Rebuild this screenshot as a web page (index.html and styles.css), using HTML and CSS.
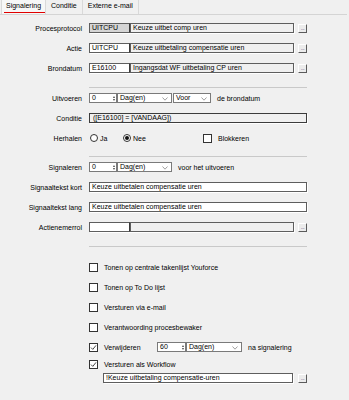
FILE: index.html
```html
<!DOCTYPE html>
<html>
<head>
<meta charset="utf-8">
<link rel="stylesheet" href="styles.css">
</head>
<body>
<div class="tabs">
  <div class="tab active"><span>Signalering</span></div>
  <div class="tab"><span>Conditie</span></div>
  <div class="tab"><span>Externe e-mail</span></div>
</div>
<div class="panel">
  <div class="row">
    <div class="lbl">Procesprotocol</div>
    <div class="field code grey">UITCPU</div>
    <div class="field desc">Keuze uitbet comp uren</div>
    <div class="btn">...</div>
  </div>
  <div class="row">
    <div class="lbl">Actie</div>
    <div class="field code">UITCPU</div>
    <div class="field desc">Keuze uitbetaling compensatie uren</div>
    <div class="btn">...</div>
  </div>
  <div class="row">
    <div class="lbl">Brondatum</div>
    <div class="field code">E16100</div>
    <div class="field desc">Ingangsdat WF uitbetaling CP uren</div>
    <div class="btn">...</div>
  </div>
  <div class="sep"></div>
  <div class="row">
    <div class="lbl">Uitvoeren</div>
    <div class="spin w27">0<span class="arrows"><i class="up"></i><i class="dn"></i></span></div>
    <div class="combo w55">Dag(en)<svg class="chev" width="6" height="4" viewBox="0 0 6 4"><polyline points="0.5,0.5 3,3.2 5.5,0.5" fill="none" stroke="#777" stroke-width="0.7"/></svg></div>
    <div class="combo w38">Voor<svg class="chev" width="6" height="4" viewBox="0 0 6 4"><polyline points="0.5,0.5 3,3.2 5.5,0.5" fill="none" stroke="#777" stroke-width="0.7"/></svg></div>
    <div class="after">de brondatum</div>
  </div>
  <div class="row">
    <div class="lbl">Conditie</div>
    <div class="field full cond">([E16100] = [VANDAAG])</div>
  </div>
  <div class="row">
    <div class="lbl">Herhalen</div>
    <div class="radio"></div><div class="rlbl ja">Ja</div>
    <div class="radio on"></div><div class="rlbl nee">Nee</div>
    <div class="check"></div><div class="clbl">Blokkeren</div>
  </div>
  <div class="sep sep2"></div>
  <div class="row">
    <div class="lbl">Signaleren</div>
    <div class="spin w27">0<span class="arrows"><i class="up"></i><i class="dn"></i></span></div>
    <div class="combo w55">Dag(en)<svg class="chev" width="6" height="4" viewBox="0 0 6 4"><polyline points="0.5,0.5 3,3.2 5.5,0.5" fill="none" stroke="#777" stroke-width="0.7"/></svg></div>
    <div class="after">voor het uitvoeren</div>
  </div>
  <div class="row">
    <div class="lbl">Signaaltekst kort</div>
    <div class="field full white">Keuze uitbetalen compensatie uren</div>
  </div>
  <div class="row">
    <div class="lbl">Signaaltekst lang</div>
    <div class="field full white">Keuze uitbetalen compensatie uren</div>
  </div>
  <div class="row">
    <div class="lbl">Actienemerrol</div>
    <div class="field code"></div>
    <div class="field desc"></div>
    <div class="btn">...</div>
  </div>
  <div class="sep sep3"></div>
  <div class="crow first">
    <div class="check"></div><div class="clbl">Tonen op centrale takenlijst Youforce</div>
  </div>
  <div class="crow">
    <div class="check"></div><div class="clbl">Tonen op To Do lijst</div>
  </div>
  <div class="crow">
    <div class="check"></div><div class="clbl">Versturen via e-mail</div>
  </div>
  <div class="crow">
    <div class="check"></div><div class="clbl">Verantwoording procesbewaker</div>
  </div>
  <div class="crow">
    <div class="check on"><svg width="7" height="7" viewBox="0 0 7 7"><polyline points="1,3.6 2.8,5.4 6,1.4" fill="none" stroke="#333" stroke-width="0.9"/></svg></div>
    <div class="clbl wverw">Verwijderen</div>
    <div class="spin w29">60<span class="arrows"><i class="up"></i><i class="dn"></i></span></div>
    <div class="combo w56">Dag(en)<svg class="chev" width="6" height="4" viewBox="0 0 6 4"><polyline points="0.5,0.5 3,3.2 5.5,0.5" fill="none" stroke="#777" stroke-width="0.7"/></svg></div>
    <div class="after">na signalering</div>
  </div>
  <div class="crow wf">
    <div class="check on"><svg width="7" height="7" viewBox="0 0 7 7"><polyline points="1,3.6 2.8,5.4 6,1.4" fill="none" stroke="#333" stroke-width="0.9"/></svg></div>
    <div class="clbl">Versturen als Workflow</div>
  </div>
  <div class="wfrow">
    <div class="field wffield white">!Keuze uitbetaling compensatie-uren</div>
    <div class="btn">...</div>
  </div>
</div>
</body>
</html>
```

FILE: styles.css
```css
html, body {
  margin: 0;
  padding: 0;
}
body {
  width: 349px;
  height: 400px;
  background: #f0f0f0;
  font-family: "Liberation Sans", Arial, sans-serif;
  font-size: 7px;
  color: #000;
  overflow: hidden;
}
.tabs {
  display: flex;
  height: 14px;
  border-bottom: 1px solid #d4d4d4;
  width: 347px;
  box-sizing: content-box;
}
.tab {
  height: 14px;
  padding: 0 5px;
  border-right: 1px solid #d9d9d9;
  line-height: 12px;
  box-sizing: border-box;
  position: relative;
}
.tab:first-child {
  border-left: 1px solid #d9d9d9;
  padding: 0 4px 0 4px;
  margin-left: 1px;
}
.tab.active {
  background: #f7f7f7;
}
.tab.active::after {
  content: "";
  position: absolute;
  left: 2px;
  right: 0;
  bottom: 1px;
  height: 1px;
  background: #e00000;
}
.panel {
  width: 346px;
  padding-top: 3px;
  box-sizing: border-box;
}
.row {
  display: flex;
  align-items: center;
  height: 20px;
}
.lbl {
  width: 82px;
  margin-right: 7px;
  text-align: right;
  white-space: nowrap;
}
.field {
  height: 10px;
  box-sizing: border-box;
  border: 1px solid #5e5e5e;
  box-shadow: 1px 1px 0 #ffffff;
  line-height: 8px;
  padding-left: 2px;
  white-space: nowrap;
  overflow: hidden;
  background: #f0f0f0;
}
.field.code {
  width: 41px;
  background: #fff;
  border-right: 1px solid #3a3a3a;
}
.field.code.grey {
  background: #d5d5d5;
}
.field.desc {
  width: 164px;
}
.field.full {
  width: 218px;
}
.field.white {
  background: #fff;
}
.field.cond {
  border-color: #3c3c3c;
  padding-left: 3px;
}
.btn {
  width: 9px;
  height: 9px;
  margin-left: 4px;
  box-sizing: border-box;
  border-top: 1px solid #fff;
  border-left: 1px solid #fff;
  border-right: 1px solid #5a5a5a;
  border-bottom: 1px solid #5a5a5a;
  background: #ececec;
  color: #5b4b8a;
  font-size: 6px;
  line-height: 6px;
  text-align: center;
  letter-spacing: -0.5px;
  overflow: hidden;
}
.sep {
  height: 1px;
  background: #c9c9c9;
  margin: 9px 0 0 89px;
  width: 218px;
}
.sep2 {
  margin-top: 8px;
}
.spin, .combo {
  height: 10px;
  box-sizing: border-box;
  border: 1px solid #7a7a7a;
  background: #fff;
  line-height: 8px;
  padding-left: 2px;
  position: relative;
}
.w27 { width: 28px; }
.w29 { width: 29px; }
.w55 { width: 55px; }
.w56 { width: 56px; }
.w38 { width: 38px; margin-left: 1px; }
.arrows {
  position: absolute;
  right: 0;
  top: 0;
  width: 5px;
  height: 8px;
  display: flex;
  flex-direction: column;
  justify-content: center;
  align-items: center;
  gap: 1px;
}
.arrows i {
  display: block;
  width: 0;
  height: 0;
  border-left: 1.5px solid transparent;
  border-right: 1.5px solid transparent;
}
.arrows .up { border-bottom: 2px solid #444; }
.arrows .dn { border-top: 2px solid #444; }
.chev {
  position: absolute;
  right: 3px;
  top: 3px;
}
.after {
  margin-left: 6px;
  white-space: nowrap;
}
.radio {
  width: 8px;
  height: 8px;
  box-sizing: border-box;
  border: 1px solid #333;
  border-radius: 50%;
  background: #fff;
  margin-left: 1px;
  display: flex;
  align-items: center;
  justify-content: center;
}
.radio.on::after {
  content: "";
  width: 4px;
  height: 4px;
  border-radius: 50%;
  background: #111;
}
.rlbl {
  margin-left: 2px;
}
.rlbl.ja {
  width: 22px;
}
.rlbl.nee {
  width: 70px;
}
.check {
  width: 9px;
  height: 9px;
  box-sizing: border-box;
  border: 1px solid #333;
  background: #fff;
  display: flex;
  align-items: center;
  justify-content: center;
}
.clbl {
  margin-left: 6px;
  white-space: nowrap;
}
.crow {
  display: flex;
  align-items: center;
  height: 20px;
  padding-left: 89px;
}
.crow.first {
  margin-top: 10px;
}
.clbl.wverw {
  width: 53px;
}
.crow.wf {
  height: 15px;
}
.wfrow {
  display: flex;
  align-items: center;
  margin-top: 1px;
  padding-left: 103px;
}
.field.wffield {
  width: 190px;
}
.wfrow .btn {
  margin-left: 5px;
}
```
